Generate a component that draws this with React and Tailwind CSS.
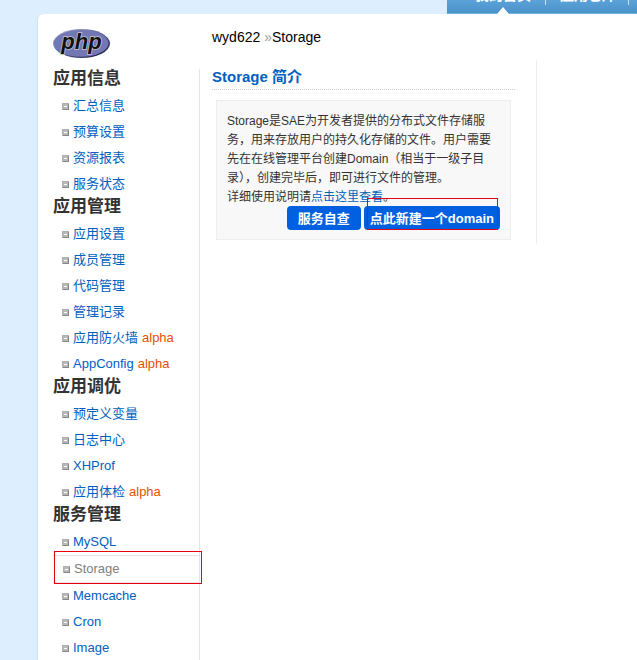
const groups = [
  {
    title: '应用信息',
    items: [{ name: '汇总信息' }, { name: '预算设置' }, { name: '资源报表' }, { name: '服务状态' }],
  },
  {
    title: '应用管理',
    items: [
      { name: '应用设置' },
      { name: '成员管理' },
      { name: '代码管理' },
      { name: '管理记录' },
      { name: '应用防火墙', alpha: true },
      { name: 'AppConfig', alpha: true },
    ],
  },
  {
    title: '应用调优',
    items: [{ name: '预定义变量' }, { name: '日志中心' }, { name: 'XHProf' }, { name: '应用体检', alpha: true }],
  },
  {
    title: '服务管理',
    items: [{ name: 'MySQL' }, { name: 'Storage', active: true }, { name: 'Memcache' }, { name: 'Cron' }, { name: 'Image' }],
  },
];

function PhpLogo() {
  return (
    <svg viewBox="0 0 58 32" className="h-8 w-[58px]" role="img" aria-label="php">
      <defs>
        <linearGradient id="rim" x1="0" y1="0" x2="1" y2="1">
          <stop offset="0" stopColor="#b9bce0" />
          <stop offset="0.5" stopColor="#5a5e98" />
          <stop offset="1" stopColor="#14152a" />
        </linearGradient>
      </defs>
      <ellipse cx="28.5" cy="17.5" rx="28.5" ry="14.5" fill="url(#rim)" />
      <ellipse cx="28.2" cy="17.3" rx="27.2" ry="13.4" fill="#7377b4" />
      <text
        x="28.5"
        y="23"
        textAnchor="middle"
        fontFamily="Liberation Sans, sans-serif"
        fontSize="22"
        fontWeight="bold"
        fontStyle="italic"
        fill="#111"
        stroke="#c4c4d8"
        strokeWidth="1.6"
        paintOrder="stroke"
      >
        php
      </text>
    </svg>
  );
}

function Bullet() {
  return (
    <svg viewBox="0 0 7 7" className="mr-1 h-[7px] w-[7px] shrink-0" shapeRendering="crispEdges" aria-hidden="true">
      <rect width="7" height="7" fill="#858585" />
      <rect width="7" height="1" fill="#b0b0b0" />
      <rect width="1" height="7" fill="#b0b0b0" />
      <rect x="1" y="1" width="5" height="5" fill="#b8b8b8" />
      <rect x="2" y="3" width="3" height="1" fill="#fff" />
    </svg>
  );
}

function NavItem({ item }) {
  if (item.active) {
    return (
      <li className="relative flex h-7 items-center border-y border-[#e5e5e5] bg-white pl-2.5">
        <Bullet />
        <a href="#" className="text-[#808080]">{item.name}</a>
        {/* highlight frame */}
        <span className="pointer-events-none absolute -top-[5px] -right-[3px] -bottom-0.5 left-px border border-[#e60012]" />
      </li>
    );
  }

  return (
    <li className="flex h-[26px] items-center pl-[9px]">
      <Bullet />
      <a href="#" className="text-[#0060bf]">{item.name}</a>
      {item.alpha && <span className="ml-1 text-[#e65100]">alpha</span>}
    </li>
  );
}

function Sidebar() {
  return (
    <aside className="w-[147px] shrink-0">
      <PhpLogo />
      <nav className="mt-[11px] border-r border-[#e5e5e5] pb-4 text-[13px]">
        {groups.map(group => (
          <section key={group.title}>
            <h2 className="mb-1 text-[17px] leading-5 font-bold text-[#333]">{group.title}</h2>
            <ul>
              {group.items.map(item => <NavItem key={item.name} item={item} />)}
            </ul>
          </section>
        ))}
      </nav>
    </aside>
  );
}

export default function App() {
  return (
    <div className="h-screen overflow-hidden bg-[#dceeff] font-['Liberation_Sans','Noto_Sans_CJK_SC',sans-serif] text-black">
      {/* TOP NAV */}
      <header className="flex h-3.5 justify-end overflow-hidden">
        <nav className="relative flex h-3.5 w-[190px] items-end border-b border-[#6fb0e0] bg-linear-to-b from-[#5ba2d8] to-[#4b92cb] text-sm leading-4 font-bold text-white">
          <a href="#" className="mb-2.5 ml-7 w-[70px] shrink-0">我的首页</a>
          <span className="mb-2 h-4 w-px shrink-0 bg-[#c5e0f5]" />
          <a href="#" className="mb-2.5 ml-3.5 w-[68px] shrink-0">应用仓库</a>
          <span className="mb-2 h-4 w-px shrink-0 bg-[#c5e0f5]" />
          <svg viewBox="0 0 12 7" className="absolute -bottom-px left-[50px] h-[7px] w-3" aria-hidden="true">
            <path d="M6 0L12 7H0Z" fill="#fff" />
          </svg>
        </nav>
      </header>

      <div className="ml-[37px] flex min-h-screen rounded-tl-md border-l border-[#cfe4f7] bg-white pt-3 pl-[15px]">
        <Sidebar />

        <main className="ml-3 flex min-w-0 flex-1 flex-col">
          <p className="text-sm leading-[22px]">
            wyd622 <span className="text-[#999]">»</span>Storage
          </p>

          <div className="mt-3 flex">
            <div className="max-w-[325px] flex-1 border-r border-[#eee] pr-[21px] pb-1">
              <h1 className="border-b border-dotted border-[#ccc] pt-1.5 pb-0.5 text-[15px] leading-[21px] font-bold text-[#0060bf]">
                Storage 简介
              </h1>

              <div className="mx-1 mt-2.5 border border-[#eee] bg-[#f8f8f8] px-2.5 pt-[11px] pb-[9px] text-xs leading-[19px] text-[#333]">
                <p>
                  Storage是SAE为开发者提供的分布式文件存储服务，用来存放用户的持久化存储的文件。用户需要先在在线管理平台创建Domain（相当于一级子目录），创建完毕后，即可进行文件的管理。
                </p>
                <p>
                  详细使用说明请<a href="#" className="text-[#0060bf]">点击这里查看</a>。
                </p>
                <div className="-mt-px flex justify-end gap-[3px] text-[13px] font-bold whitespace-nowrap text-white">
                  <button className="h-6 rounded bg-[#0060e0] px-[11px]">服务自查</button>
                  <div className="relative">
                    <button className="h-6 rounded bg-[#0060e0] px-1.5">点此新建一个domain</button>
                    <span className="pointer-events-none absolute -top-2 right-0.5 bottom-0 left-[3px] border border-[#e60012]" />
                  </div>
                </div>
              </div>
            </div>
          </div>
        </main>
      </div>
    </div>
  );
}
